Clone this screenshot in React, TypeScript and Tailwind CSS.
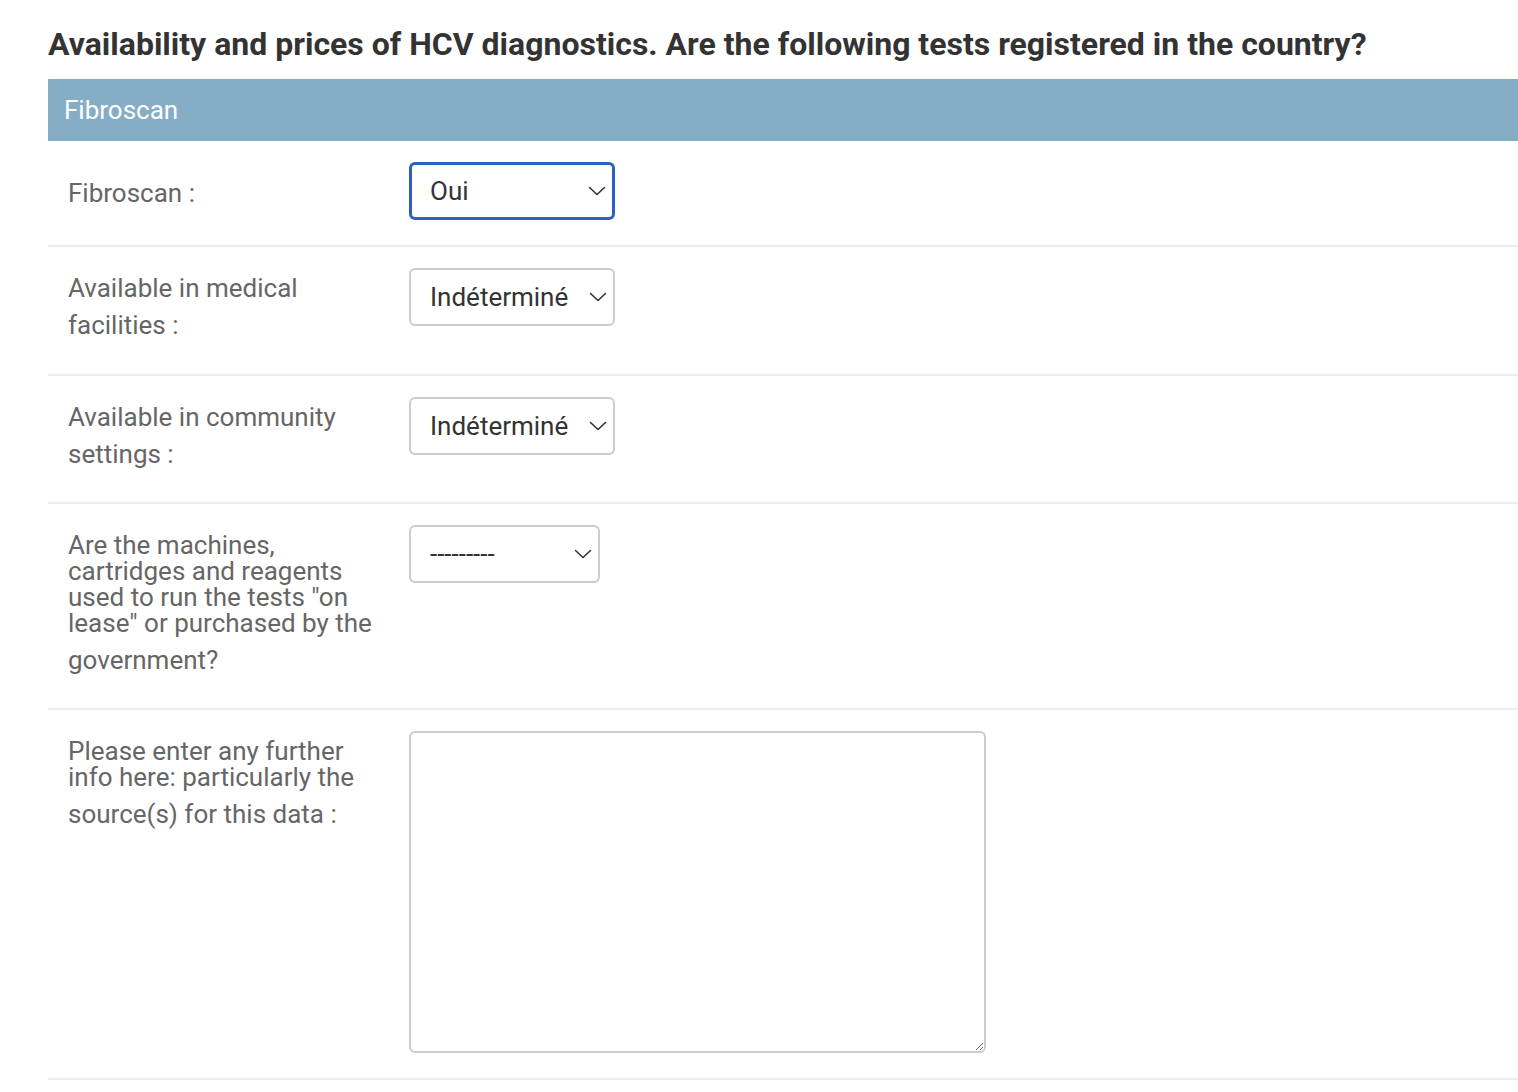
import { ReactNode } from "react"

function Chevron() {
  return (
    <svg width="18" height="10" viewBox="0 0 18 10" fill="none" className="shrink-0">
      <path d="M1.5 1.5 L9 8.5 L16.5 1.5" stroke="#333" strokeWidth="1.6" strokeLinecap="round" strokeLinejoin="round" />
    </svg>
  )
}

function FakeSelect({ value, width, focused }: { value: string; width: string; focused?: boolean }) {
  return (
    <div
      className={`${width} h-[58px] flex items-center justify-between pr-[6px] rounded-[6px] bg-white ${
        focused ? "border-[3px] border-[#2a62c4] pl-[18px]" : "border-2 border-[#cccccc] pl-[19px]"
      }`}
    >
      <span className="text-[26px] text-[#333] leading-none">{value}</span>
      <Chevron />
    </div>
  )
}

function Row({ lines, pb = "pb-[25px]", children }: { lines: string[]; pb?: string; children: ReactNode }) {
  const first = lines.slice(0, -1)
  const last = lines[lines.length - 1]
  return (
    <div className={`flex items-start pl-[20px] pt-[21px] ${pb} border-b-2 border-[#eeeeee]`}>
      <div className="w-[341px] shrink-0 pt-[7px] text-[26px] text-[#666] leading-[26px]">
        {first.map((l) => (
          <div key={l}>{l}</div>
        ))}
        <div className="py-[11px]">{last}</div>
      </div>
      {children}
    </div>
  )
}

export default function App() {
  return (
    <main className="min-h-screen bg-white font-['Roboto',sans-serif] pl-[48px] pt-[24px]">
      <h1 className="text-[32px] font-bold text-[#333] leading-[40px]">
        Availability and prices of HCV diagnostics. Are the following tests registered in the country?
      </h1>

      <div className="mt-[15px]">
        <div className="h-[62px] bg-[#85adc6] flex items-center pl-[16px]">
          <span className="text-white text-[26px]">Fibroscan</span>
        </div>

        <Row lines={["Fibroscan :"]}>
          <FakeSelect value="Oui" width="w-[206px]" focused />
        </Row>

        <Row lines={["Available in medical", "facilities :"]}>
          <FakeSelect value="Indéterminé" width="w-[206px]" />
        </Row>

        <Row lines={["Available in community", "settings :"]} pb="pb-[24px]">
          <FakeSelect value="Indéterminé" width="w-[206px]" />
        </Row>

        <Row
          lines={[
            "Are the machines,",
            "cartridges and reagents",
            'used to run the tests "on',
            'lease" or purchased by the',
            "government?",
          ]}
          pb="pb-[24px]"
        >
          <FakeSelect value="---------" width="w-[191px]" />
        </Row>

        <Row lines={["Please enter any further", "info here: particularly the", "source(s) for this data :"]}>
          <textarea className="w-[577px] h-[322px] border-2 border-[#cccccc] rounded-[6px] bg-white outline-none" />
        </Row>
      </div>
    </main>
  )
}
